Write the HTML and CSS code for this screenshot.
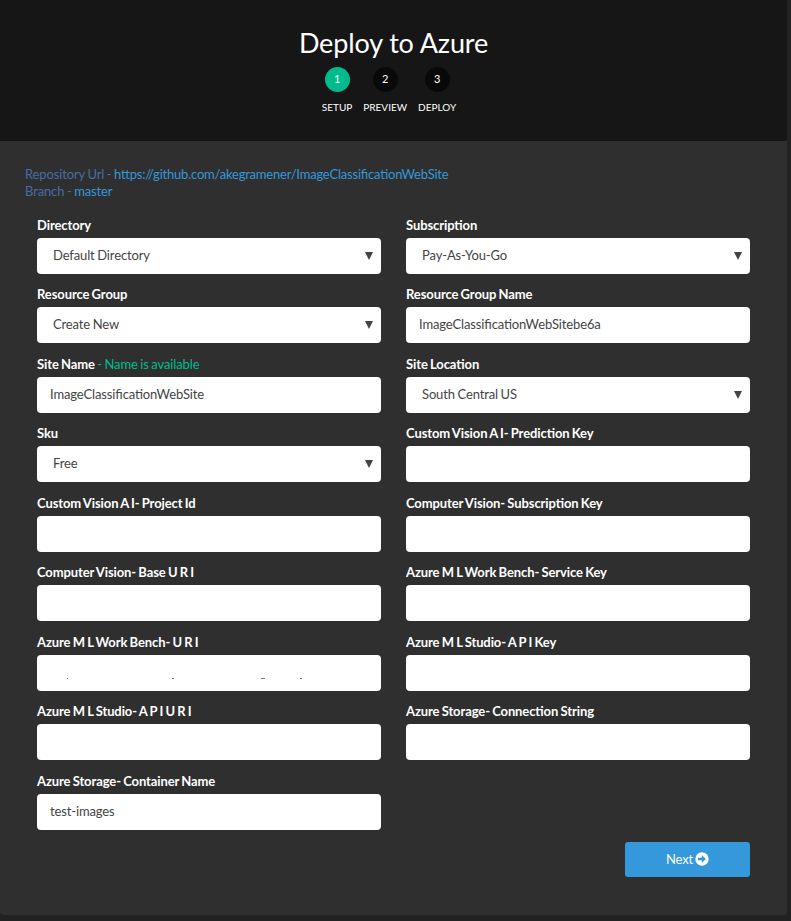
FILE: index.html
```html
<!DOCTYPE html>
<html lang="en">
<head>
<meta charset="utf-8">
<title>Deploy to Azure</title>
<link rel="stylesheet" href="styles.css">
</head>
<body>
<main class="panel">
  <header class="header">
    <h1>Deploy to Azure</h1>
    <ol class="steps">
      <li class="step active"><span class="dot">1</span><span class="name">SETUP</span></li>
      <li class="step"><span class="dot">2</span><span class="name">PREVIEW</span></li>
      <li class="step"><span class="dot">3</span><span class="name">DEPLOY</span></li>
    </ol>
  </header>
  <section class="repo">
    <div>Repository Url - <a class="url">https://github.com/akegramener/ImageClassificationWebSite</a></div>
    <div>Branch - <a>master</a></div>
  </section>
  <form class="form">
    <div class="field"><label>Directory</label><div class="control select">Default Directory<i></i></div></div>
    <div class="field"><label>Subscription</label><div class="control select">Pay-As-You-Go<i></i></div></div>
    <div class="field"><label>Resource Group</label><div class="control select">Create New<i></i></div></div>
    <div class="field"><label>Resource Group Name</label><div class="control">ImageClassificationWebSitebe6a</div></div>
    <div class="field"><label>Site Name<span class="ok"> - Name is available</span></label><div class="control">ImageClassificationWebSite</div></div>
    <div class="field"><label>Site Location</label><div class="control select">South Central US<i></i></div></div>
    <div class="field"><label>Sku</label><div class="control select">Free<i></i></div></div>
    <div class="field"><label>Custom Vision A I- Prediction Key</label><div class="control"></div></div>
    <div class="field"><label>Custom Vision A I- Project Id</label><div class="control"></div></div>
    <div class="field"><label>Computer Vision- Subscription Key</label><div class="control"></div></div>
    <div class="field"><label>Computer Vision- Base U R I</label><div class="control"></div></div>
    <div class="field"><label>Azure M L Work Bench- Service Key</label><div class="control"></div></div>
    <div class="field"><label>Azure M L Work Bench- U R I</label><div class="control marks"><svg width="344" height="36" viewBox="0 0 344 36"><path d="M30 23.5h1M135 23.5h2M224 23.5h4M263 23.5h2"/></svg></div></div>
    <div class="field"><label>Azure M L Studio- A P I Key</label><div class="control"></div></div>
    <div class="field"><label>Azure M L Studio- A P I U R I</label><div class="control"></div></div>
    <div class="field"><label>Azure Storage- Connection String</label><div class="control"></div></div>
    <div class="field"><label>Azure Storage- Container Name</label><div class="control">test-images</div></div>
  </form>
  <div class="actions">
    <button type="button">Next<svg width="14" height="14" viewBox="0 0 14 14"><circle cx="7" cy="7" r="6.7" fill="#fff"/><path d="M3 5.7h3.7V3.2L11 7l-4.3 3.8V8.3H3z" fill="#3498db"/></svg></button>
  </div>
</main>
</body>
</html>
```
FILE: styles.css
```css
* { box-sizing: border-box; }
body {
  margin: 0;
  height: 921px;
  overflow: hidden;
  background: #222;
  font: 13px/17px Lato, sans-serif;
  font-feature-settings: "liga" 1;
  letter-spacing: -0.13px;
  word-spacing: -0.6px;
  color: #fff;
}
.panel {
  width: 787px;
  height: 915px;
  background: #2f2f2f;
  border-radius: 0 0 4px 4px;
}
.header {
  height: 141px;
  padding-top: 27px;
  background: #161616;
}
h1 {
  margin: 0;
  font-size: 27px;
  line-height: 32px;
  font-weight: 400;
  text-align: center;
  word-spacing: 0;
}
.steps {
  display: flex;
  justify-content: center;
  gap: 11px;
  margin: 8px 0 0;
  padding: 0 9px 0 0;
  list-style: none;
  letter-spacing: 0;
}
.step {
  display: flex;
  flex-direction: column;
  align-items: center;
  font-size: 10px;
}
.dot {
  width: 25px;
  height: 25px;
  border-radius: 50%;
  background: #090909;
  font-size: 11px;
  line-height: 24px;
  text-align: center;
}
.active .dot { background: #00bc8c; }
.name { margin-top: 7px; line-height: 17px; }
.repo {
  padding: 25px 25px 0;
  color: #446ea5;
}
.repo a { color: #3498db; }
.repo .url { letter-spacing: -0.21px; }
.form {
  display: grid;
  grid-template-columns: 344px 344px;
  grid-auto-rows: 69.45px;
  column-gap: 25px;
  padding: 17px 0 0 37px;
}
label {
  display: block;
  height: 21px;
  line-height: 17px;
  font-weight: 700;
  letter-spacing: -0.1px;
  word-spacing: -0.8px;
  white-space: nowrap;
}
.ok { font-weight: 400; color: #00bc8c; }
.control {
  display: flex;
  align-items: center;
  height: 36px;
  padding: 0 13px 1px;
  border-radius: 4px;
  background: #fff;
  color: #444;
}
.select { padding: 0 8px 1px 16px; }
.select i {
  margin: 1px 0 0 auto;
  border: solid transparent;
  border-width: 8px 4px 0;
  border-top-color: #444;
}
.marks { padding: 0; }
.marks path { stroke: #777; }
.actions {
  display: flex;
  justify-content: flex-end;
  padding-right: 37px;
}
button {
  display: flex;
  align-items: center;
  justify-content: center;
  width: 125px;
  height: 35px;
  border: 0;
  border-radius: 3px;
  background: #3498db;
  color: #fff;
  font: inherit;
  letter-spacing: -0.2px;
}
button svg { margin: -1px 0 0 2px; }
```
